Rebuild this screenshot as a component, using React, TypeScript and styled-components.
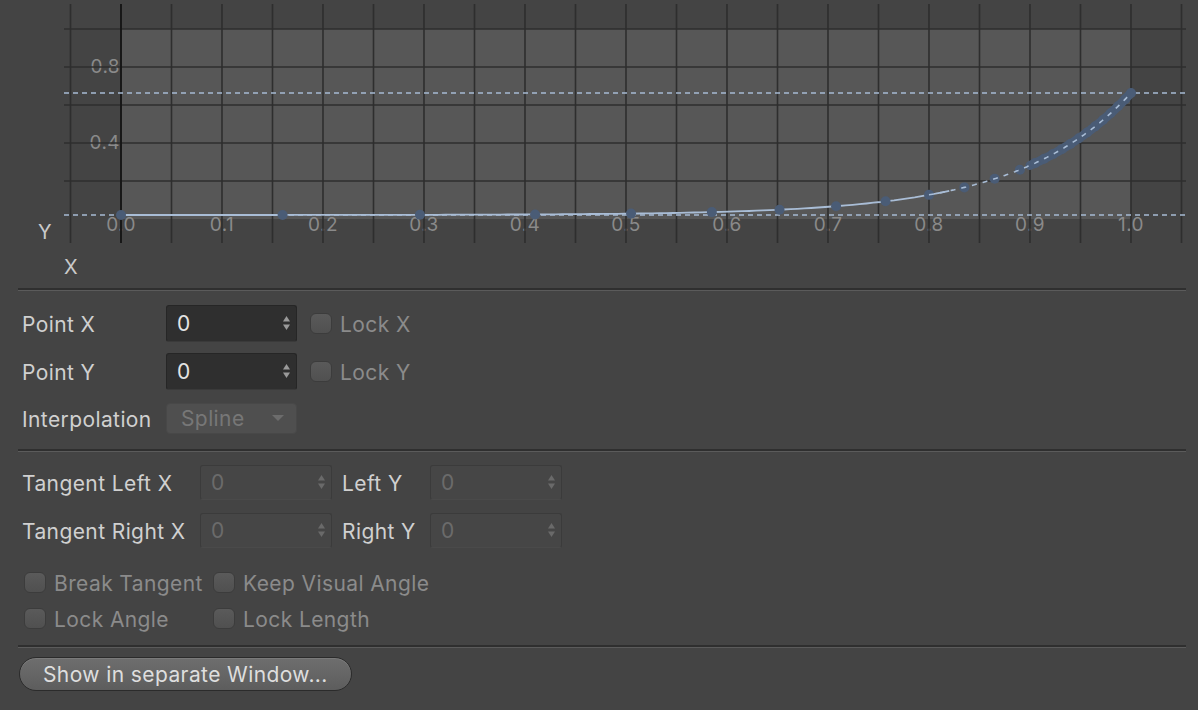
import React from "react";
import styled, { createGlobalStyle } from "styled-components";

const FONT = `Inter, "Liberation Sans", Arial, sans-serif`;

const Global = createGlobalStyle`
  html, body { margin: 0; padding: 0; background: #444444; }
  body { font-family: ${FONT}; overflow: hidden; letter-spacing: 0.4px; }
`;

const Page = styled.div`
  width: 1198px;
  height: 710px;
  background: #444444;
  display: flex;
  flex-direction: column;
`;

const GraphBox = styled.div`
  height: 288px;
  flex: none;
`;

const Panel = styled.div`
  display: flex;
  flex-direction: column;
  padding: 0 12px 0 18px;
`;

const Separator = styled.div`
  height: 2px;
  background: #2f2f2f;
  border-bottom: 1px solid #5b5b5b;
  flex: none;
`;

const Section = styled.div<{ $top: number; $bottom: number }>`
  display: flex;
  flex-direction: column;
  padding: ${(p) => p.$top}px 0 ${(p) => p.$bottom}px 4px;
`;

const Row = styled.div<{ $h: number; $mt?: number }>`
  display: flex;
  align-items: center;
  height: ${(p) => p.$h}px;
  margin-top: ${(p) => p.$mt ?? 0}px;
`;

const Label = styled.div<{ $w: number }>`
  width: ${(p) => p.$w}px;
  flex: none;
  font-size: 21px;
  color: #d0d0d0;
  white-space: nowrap;
  padding-top: 3px;
`;

const NumField = styled.div<{ $disabled?: boolean; $w: number; $h: number }>`
  width: ${(p) => p.$w}px;
  height: ${(p) => p.$h}px;
  box-sizing: border-box;
  flex: none;
  display: flex;
  align-items: center;
  justify-content: space-between;
  padding: 0 5px 0 10px;
  border-radius: 3px;
  background: ${(p) => (p.$disabled ? "#464646" : "#2f2f2f")};
  border: 1px solid ${(p) => (p.$disabled ? "#3b3b3b" : "#262626")};
  border-bottom-color: ${(p) => (p.$disabled ? "#4a4a4a" : "#3a3a3a")};
  font-size: 21px;
  color: ${(p) => (p.$disabled ? "#6b6b6b" : "#e4e4e4")};
`;

const Gap = styled.div<{ $w: number }>`
  width: ${(p) => p.$w}px;
  flex: none;
`;

const Check = styled.div`
  width: 22px;
  height: 21px;
  box-sizing: border-box;
  flex: none;
  border-radius: 6px;
  background: linear-gradient(#5a5a5a, #505050);
  border: 1px solid #3c3c3c;
`;

const CheckLabel = styled.div`
  font-size: 21px;
  color: #8b8b8b;
  white-space: nowrap;
  margin-left: 8px;
  padding-top: 2px;
`;

const CheckItem = styled.div<{ $w?: number }>`
  display: flex;
  align-items: center;
  width: ${(p) => (p.$w ? `${p.$w}px` : "auto")};
  flex: none;
`;

const Dropdown = styled.div`
  width: 131px;
  height: 31px;
  box-sizing: border-box;
  display: flex;
  align-items: center;
  justify-content: space-between;
  padding: 0 12px 0 14px;
  border-radius: 4px;
  background: #4f4f4f;
  border: 1px solid #484848;
  font-size: 21px;
  color: #777777;
`;

const Button = styled.button`
  margin-top: 9px;
  margin-left: 1px;
  width: 333px;
  height: 34px;
  box-sizing: border-box;
  border-radius: 17px;
  border: 1px solid #2b2b2b;
  background: linear-gradient(#6e6e6e, #5d5d5d);
  color: #dedede;
  font-family: ${FONT};
  letter-spacing: 0.4px;
  font-size: 21px;
  text-align: left;
  padding: 0 0 0 23px;
  box-shadow: inset 0 1px 0 #7a7a7a;
`;

const Spinner = ({ color }: { color: string }) => (
  <svg width="9" height="16" viewBox="0 0 9 16">
    <path d="M4.5 1 L8 6.5 L1 6.5 Z" fill={color} />
    <path d="M4.5 15 L8 9.5 L1 9.5 Z" fill={color} />
  </svg>
);

const Caret = () => (
  <svg width="12" height="8" viewBox="0 0 12 8">
    <path d="M0 1 L12 1 L6 7 Z" fill="#6c6c6c" />
  </svg>
);

const X0 = 121;
const PX = 1010;
const Y0 = 215;
const Y1 = 93;
const f = (t: number) => (Math.exp(9 * t) - 1) / (Math.exp(9) - 1);
const cx = (t: number) => X0 + t * PX;
const cy = (t: number) => Y0 - f(t) * (Y0 - Y1);
const DOT = "#4a5c76";

const polyPts = (a: number, b: number) => {
  const pts: string[] = [];
  for (let i = 0; i <= 120; i++) {
    const t = a + ((b - a) * i) / 120;
    pts.push(`${cx(t).toFixed(1)},${cy(t).toFixed(1)}`);
  }
  return pts.join(" ");
};

const Graph = () => {
  const vLines: number[] = [];
  for (let k = -1; k <= 21; k++) vLines.push(X0 + k * 50.5);
  const hLines = [29, 67, 105, 143, 181];
  const dotTs = [0, 0.16, 0.296, 0.41, 0.505, 0.585, 0.652, 0.708, 0.757, 0.8, 0.835, 0.865, 0.89];
  let t = 0.905;
  while (t < 1) {
    dotTs.push(t);
    const slope = (cy(t + 0.001) - cy(t)) / 0.001 / PX;
    const ds = Math.sqrt(1 + slope * slope);
    t += 10 / ds / PX;
  }
  dotTs.push(1);
  const labels = ["0.0", "0.1", "0.2", "0.3", "0.4", "0.5", "0.6", "0.7", "0.8", "0.9", "1.0"];
  return (
    <svg width="1198" height="288" viewBox="0 0 1198 288">
      <rect x={X0} y={29} width={PX} height={190} fill="#575757" />
      {labels.map((l, i) => (
        <text
          key={l}
          x={X0 + i * 101}
          y={231}
          textAnchor="middle"
          fontSize="19"
          fontFamily={FONT}
          fill="#8a8a8a"
        >
          {l}
        </text>
      ))}
      <text x={120} y={73} textAnchor="end" fontSize="19" fontFamily={FONT} fill="#8a8a8a">0.8</text>
      <text x={120} y={149} textAnchor="end" fontSize="19" fontFamily={FONT} fill="#8a8a8a">0.4</text>
      {vLines.map((x) => (
        <line key={x} x1={x} x2={x} y1={4} y2={243} stroke="#2e2e2e" strokeWidth="1.6" />
      ))}
      {hLines.map((y) => (
        <line key={y} x1={64} x2={1186} y1={y} y2={y} stroke="#2e2e2e" strokeWidth="1.6" />
      ))}
      <line x1={X0} x2={X0} y1={4} y2={243} stroke="#161616" strokeWidth="1.8" />
      <line x1={64} x2={1186} y1={Y1} y2={Y1} stroke="#a6bad3" strokeWidth="1.5" strokeDasharray="5 4" />
      <line x1={64} x2={1186} y1={Y0} y2={Y0} stroke="#a6bad3" strokeWidth="1.5" strokeDasharray="5 4" />
      <polyline points={polyPts(0.9, 1)} fill="none" stroke={DOT} strokeWidth="9" strokeLinecap="round" />
      <polyline points={polyPts(0, 0.82)} fill="none" stroke="#a9bdd6" strokeWidth="1.8" />
      {dotTs.map((tt, i) => (
        <circle key={i} cx={cx(tt)} cy={cy(tt)} r={5} fill={DOT} />
      ))}
      <polyline points={polyPts(0.8, 1)} fill="none" stroke="#a9bdd6" strokeWidth="1.6" strokeDasharray="5 6" />
      <text x={38} y={239} fontSize="20" fontFamily={FONT} fill="#cacaca">Y</text>
      <text x={64} y={274} fontSize="20" fontFamily={FONT} fill="#cacaca">X</text>
    </svg>
  );
};

export default function App() {
  return (
    <Page>
      <Global />
      <GraphBox>
        <Graph />
      </GraphBox>
      <Panel>
        <Separator />
        <Section $top={8} $bottom={8}>
          <Row $h={48}>
            <Label $w={144}>Point X</Label>
            <NumField $w={131} $h={37}>
              <span>0</span>
              <Spinner color="#9a9a9a" />
            </NumField>
            <Gap $w={13} />
            <CheckItem>
              <Check />
              <CheckLabel>Lock X</CheckLabel>
            </CheckItem>
          </Row>
          <Row $h={48}>
            <Label $w={144}>Point Y</Label>
            <NumField $w={131} $h={37}>
              <span>0</span>
              <Spinner color="#9a9a9a" />
            </NumField>
            <Gap $w={13} />
            <CheckItem>
              <Check />
              <CheckLabel>Lock Y</CheckLabel>
            </CheckItem>
          </Row>
          <Row $h={46}>
            <Label $w={144}>Interpolation</Label>
            <Dropdown>
              <span>Spline</span>
              <Caret />
            </Dropdown>
          </Row>
        </Section>
        <Separator />
        <Section $top={6} $bottom={9}>
          <Row $h={48}>
            <Label $w={178}>Tangent Left X</Label>
            <NumField $disabled $w={132} $h={35}>
              <span>0</span>
              <Spinner color="#6a6a6a" />
            </NumField>
            <Gap $w={10} />
            <Label $w={88}>Left Y</Label>
            <NumField $disabled $w={132} $h={35}>
              <span>0</span>
              <Spinner color="#6a6a6a" />
            </NumField>
          </Row>
          <Row $h={48}>
            <Label $w={178}>Tangent Right X</Label>
            <NumField $disabled $w={132} $h={35}>
              <span>0</span>
              <Spinner color="#6a6a6a" />
            </NumField>
            <Gap $w={10} />
            <Label $w={88}>Right Y</Label>
            <NumField $disabled $w={132} $h={35}>
              <span>0</span>
              <Spinner color="#6a6a6a" />
            </NumField>
          </Row>
          <Row $h={36} $mt={10}>
            <Gap $w={2} />
            <CheckItem $w={189}>
              <Check />
              <CheckLabel>Break Tangent</CheckLabel>
            </CheckItem>
            <CheckItem>
              <Check />
              <CheckLabel>Keep Visual Angle</CheckLabel>
            </CheckItem>
          </Row>
          <Row $h={36}>
            <Gap $w={2} />
            <CheckItem $w={189}>
              <Check />
              <CheckLabel>Lock Angle</CheckLabel>
            </CheckItem>
            <CheckItem>
              <Check />
              <CheckLabel>Lock Length</CheckLabel>
            </CheckItem>
          </Row>
        </Section>
        <Separator />
        <div>
          <Button>Show in separate Window...</Button>
        </div>
      </Panel>
    </Page>
  );
}
